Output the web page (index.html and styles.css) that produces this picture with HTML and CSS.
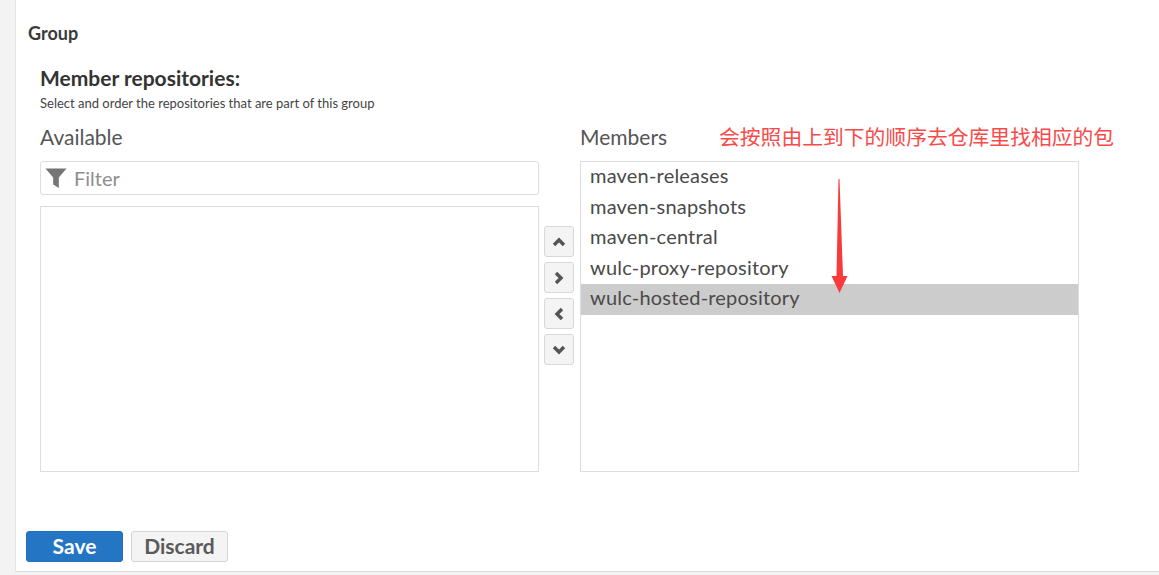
FILE: index.html

```html
<!DOCTYPE html>
<html lang="en">
<head>
  <meta charset="UTF-8">
  <title>Group</title>
  <link rel="stylesheet" href="styles.css">
</head>
<body>
  <div class="panel">
    <h3 class="section-title">Group</h3>
    <div class="field">
      <div class="field-label">Member repositories:</div>
      <div class="field-help">Select and order the repositories that are part of this group</div>
      <div class="picker">
        <div class="picker-col">
          <div class="col-title">Available</div>
          <div class="filter">
            <svg class="filter-icon" viewBox="0 0 22 22" width="22" height="22">
              <path d="M0.5 1.5H21.5L13.8 10.5V21L8.2 17.5V10.5Z" fill="#757575"/>
            </svg>
            <span class="filter-text">Filter</span>
          </div>
          <div class="list list-available"></div>
        </div>
        <div class="move-btns">
          <button class="move-btn"><svg viewBox="0 0 14 10" width="14" height="10"><path d="M2 8L7 3L12 8" class="chev"/></svg></button>
          <button class="move-btn"><svg viewBox="0 0 10 14" width="10" height="14"><path d="M2 2L7 7L2 12" class="chev"/></svg></button>
          <button class="move-btn"><svg viewBox="0 0 10 14" width="10" height="14"><path d="M8 2L3 7L8 12" class="chev"/></svg></button>
          <button class="move-btn"><svg viewBox="0 0 14 10" width="14" height="10"><path d="M2 2L7 7L12 2" class="chev"/></svg></button>
        </div>
        <div class="picker-col">
          <div class="col-title">Members</div>
          <div class="list list-members">
            <div class="item">maven-releases</div>
            <div class="item">maven-snapshots</div>
            <div class="item">maven-central</div>
            <div class="item">wulc-proxy-repository</div>
            <div class="item selected">wulc-hosted-repository</div>
          </div>
        </div>
      </div>
    </div>
    <div class="actions">
      <button class="btn btn-save">Save</button>
      <button class="btn btn-discard">Discard</button>
    </div>
    <div class="note">会按照由上到下的顺序去仓库里找相应的包</div>
    <svg class="arrow" viewBox="0 0 18 116" width="18" height="116">
      <path d="M7.5 0L5.5 97H0.5L8.5 114L16.5 97H12L8.5 0Z" fill="#f73a3a"/>
    </svg>
  </div>
</body>
</html>
```

FILE: styles.css

```css
body { margin: 0; background: #f3f3f3; font-family: Lato, "Noto Sans CJK SC", sans-serif; color: #444; }
button { font-family: inherit; }

.panel { position: relative; box-sizing: border-box; height: 572px; margin-left: 15px; background: #fff; border-left: 1px solid #e4e4e4; border-bottom: 1px solid #dcdcdc; padding-top: 24px; }
.section-title { margin: 0 0 0 12px; font-size: 18px; line-height: 19px; font-weight: 700; color: #3a3a3a; }

.field { margin: 24px 0 0 24px; }
.field-label { font-size: 21px; line-height: 22px; font-weight: 700; color: #333; }
.field-help { margin-top: 7px; font-size: 13px; line-height: 15px; color: #444; }

.picker { display: flex; margin-top: 13px; }
.picker-col { width: 499px; }
.col-title { padding-top: 1px; font-size: 21px; line-height: 24px; color: #555; margin-bottom: 12px; }

.filter { box-sizing: border-box; display: flex; align-items: center; height: 34px; padding-left: 4px; border: 1px solid #ddd; border-radius: 3px; margin-bottom: 11px; }
.filter-icon { flex: none; }
.filter-text { margin-left: 7px; font-size: 20px; line-height: 28px; color: #8e8e8e; }

.list { box-sizing: border-box; border: 1px solid #ddd; }
.list-available { height: 266px; }
.list-members { height: 311px; }
.item { height: 30.6px; line-height: 26px; padding-left: 9px; font-size: 20px; letter-spacing: 0.2px; color: #4a4a4a; }
.item.selected { background: #ccc; line-height: 27px; }

.move-btns { display: flex; flex-direction: column; gap: 5px; width: 30px; margin: 102px 6px 0 5px; }
.move-btn { display: flex; align-items: center; justify-content: center; box-sizing: border-box; width: 30px; height: 31px; padding: 0; background: #f4f4f4; border: 1px solid #d8d8d8; border-radius: 3px; }
.chev { fill: none; stroke: #555; stroke-width: 3.4; }

.actions { display: flex; gap: 8px; margin: 59px 0 0 10px; }
.btn { box-sizing: border-box; width: 97px; height: 31px; padding: 0 0 2px; border-radius: 3px; font-size: 21px; font-weight: 700; }
.btn-save { background: #2476c5; border: 1px solid #2270bc; color: #fff; }
.btn-discard { background: #f4f4f4; border: 1px solid #d5d5d5; color: #5a5a5a; }

.note { position: absolute; left: 703px; top: 122px; font-family: "Noto Sans CJK SC", sans-serif; font-size: 20.8px; line-height: 28px; color: #f94a4a; white-space: nowrap; }
.arrow { position: absolute; left: 815px; top: 179px; }
```
